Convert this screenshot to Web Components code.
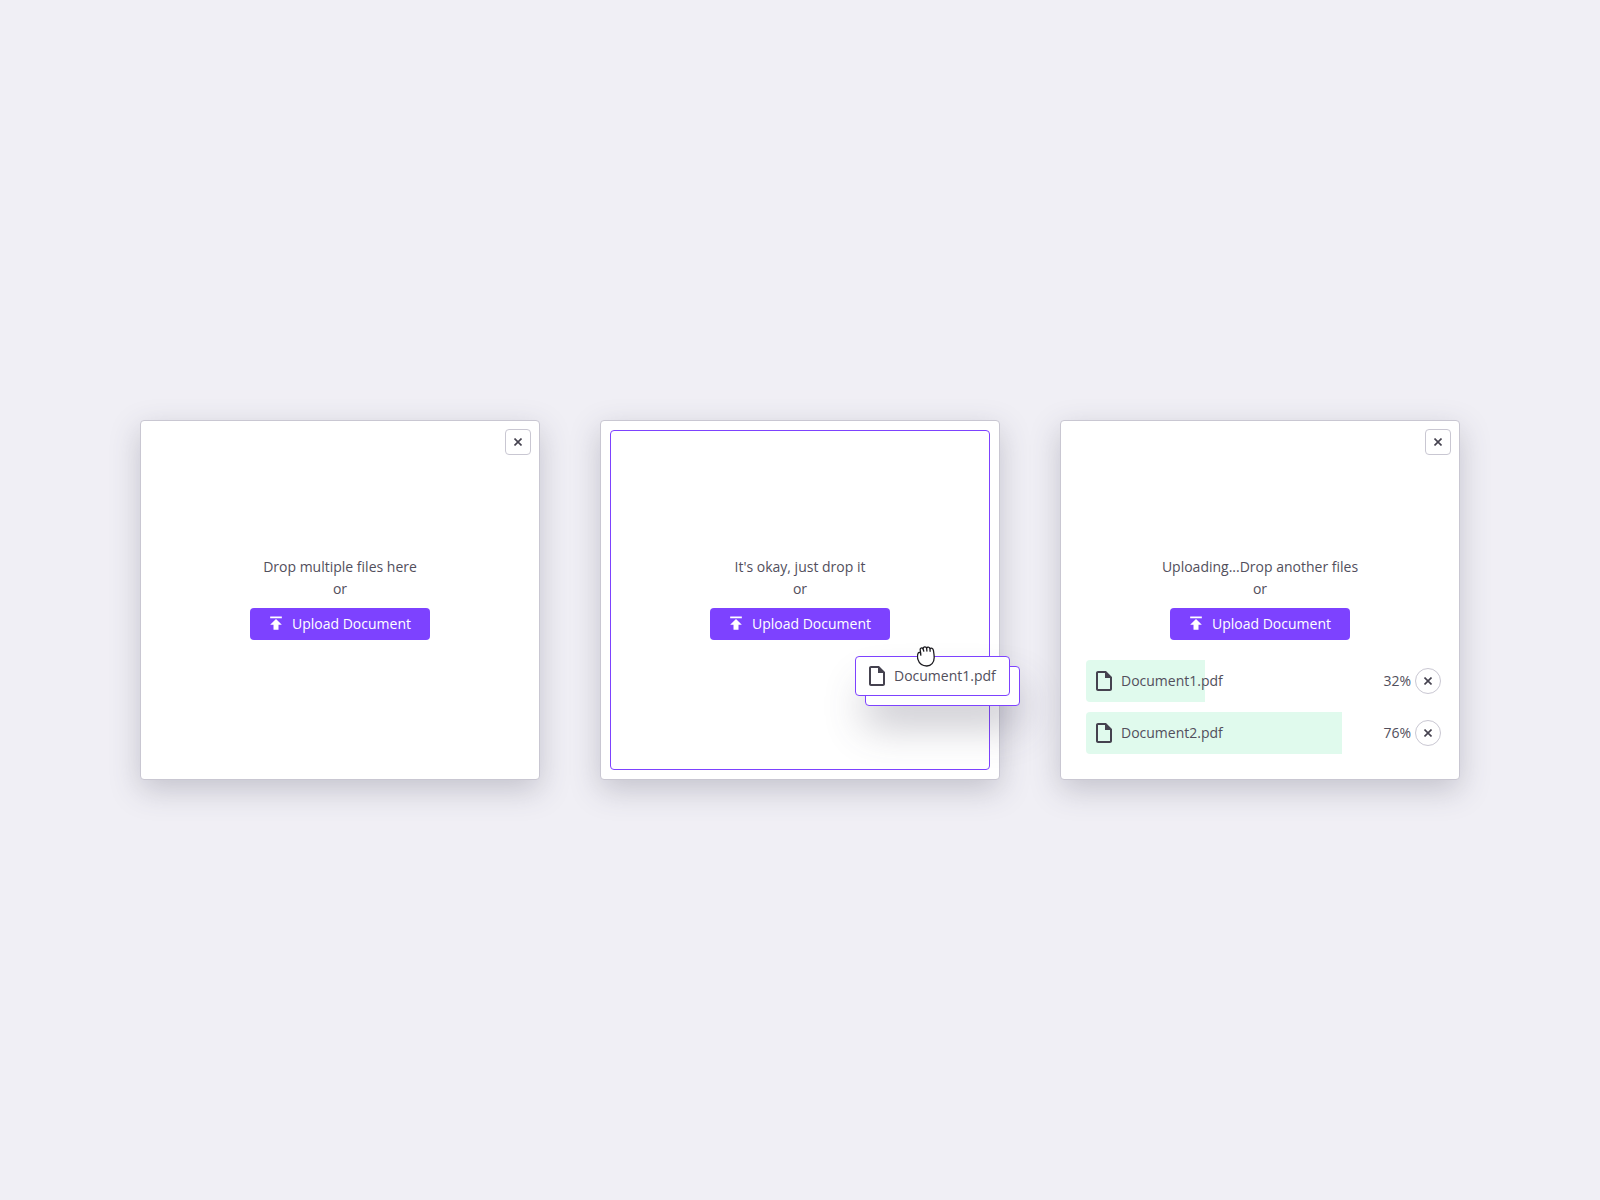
<!DOCTYPE html>
<html lang="en">
<head>
<meta charset="utf-8">
<meta name="viewport" content="width=device-width, initial-scale=1">
<title>Upload Document</title>
<style>
    body {
        margin: 0;
        min-height: 100vh;
        background: #f0eff5;
        color: #524f5c;
        font: 14px/22px "Open Sans", sans-serif;
    }
</style>
</head>
<body>
<upload-board>
    <upload-card message="Drop multiple files here" closable></upload-card>
    <upload-card message="It's okay, just drop it" active>
        <dragged-file slot="drag" name="Document1.pdf"></dragged-file>
    </upload-card>
    <upload-card message="Uploading...Drop another files" closable>
        <upload-item name="Document1.pdf" percent="32" style="--fill: 119px"></upload-item>
        <upload-item name="Document2.pdf" percent="76" style="--fill: 256px"></upload-item>
    </upload-card>
</upload-board>

<script>
class UploadBoard extends HTMLElement {
    constructor() {
        super();
        this.attachShadow({ mode: 'open' });
    }

    connectedCallback() {
        this.shadowRoot.innerHTML = `
            <style>
                :host {
                    display: flex;
                    flex-wrap: wrap;
                    align-items: center;
                    align-content: center;
                    justify-content: center;
                    gap: 60px;
                    min-height: 100vh;
                    padding: 60px;
                    box-sizing: border-box;
                }
            </style>
            <slot></slot>
        `;
    }
}

class CloseButton extends HTMLElement {
    constructor() {
        super();
        this.attachShadow({ mode: 'open' });
    }

    connectedCallback() {
        const label = this.getAttribute('label') || 'Close';

        this.shadowRoot.innerHTML = `
            <style>
                :host {
                    display: block;
                }
                button {
                    display: grid;
                    place-items: center;
                    width: 26px;
                    height: 26px;
                    padding: 0;
                    border: 1px solid #c9c7d2;
                    border-radius: 4px;
                    background: #fff;
                    color: #45424f;
                    cursor: pointer;
                }
                :host([round]) button {
                    border-radius: 50%;
                }
                svg {
                    display: block;
                }
            </style>
            <button type="button" aria-label="${label}">
                <svg width="8" height="8" viewBox="0 0 8 8" fill="none" stroke="currentColor" stroke-width="1.6">
                    <path d="M.5.5l7 7M7.5.5l-7 7"/>
                </svg>
            </button>
        `;
    }
}

class FileLabel extends HTMLElement {
    constructor() {
        super();
        this.attachShadow({ mode: 'open' });
    }

    connectedCallback() {
        this.shadowRoot.innerHTML = `
            <style>
                :host {
                    display: flex;
                    align-items: center;
                    gap: 9px;
                }
                svg {
                    flex: none;
                    display: block;
                }
            </style>
            <svg width="16" height="20" viewBox="4 2 16 20" fill="#45424f">
                <path d="M14 2H6c-1.1 0-2 .9-2 2v16c0 1.1.9 2 2 2h12c1.1 0 2-.9 2-2V8l-6-6zM6 20V4h7v5h5v11H6z"/>
            </svg>
            <span><slot></slot></span>
        `;
    }
}

class UploadItem extends HTMLElement {
    constructor() {
        super();
        this.attachShadow({ mode: 'open' });
    }

    connectedCallback() {
        const name = this.getAttribute('name');
        const percent = this.getAttribute('percent');

        this.shadowRoot.innerHTML = `
            <style>
                :host {
                    display: flex;
                    align-items: center;
                    gap: 4px;
                    height: 42px;
                    padding-left: 10px;
                    border-radius: 4px;
                    background: linear-gradient(#e0faed, #e0faed) 0 0 / var(--fill, 0) 100% no-repeat;
                }
                file-label {
                    flex: 1;
                }
            </style>
            <file-label>${name}</file-label>
            <span>${percent}%</span>
            <close-button round label="Cancel ${name}"></close-button>
        `;
    }
}

class DraggedFile extends HTMLElement {
    constructor() {
        super();
        this.attachShadow({ mode: 'open' });
    }

    connectedCallback() {
        this.shadowRoot.innerHTML = `
            <style>
                :host {
                    display: block;
                }
                .sheet, .under {
                    box-sizing: border-box;
                    border: 1px solid #7d42ff;
                    border-radius: 4px;
                    background: #fff;
                }
                .sheet {
                    position: relative;
                    display: flex;
                    height: 40px;
                    padding: 0 13px;
                }
                /* second file of the stack, peeking out below */
                .under {
                    position: absolute;
                    inset: 10px -10px -10px 10px;
                    box-shadow: 0 20px 40px rgba(69, 66, 89, .3);
                }
                .hand {
                    position: absolute;
                    top: -11px;
                    left: 61px;
                }
            </style>
            <div class="under"></div>
            <div class="sheet">
                <file-label>${this.getAttribute('name')}</file-label>
                <svg class="hand" width="18" height="21" viewBox="0 0 18 21" fill="#fff" stroke="#1c1b20" stroke-width="1.3" stroke-linecap="round" stroke-linejoin="round">
                    <path d="M3.8 8.2L3.2 4C2.9 2 5 1.2 6 2.7C6.2.6 8.9.2 9.6 2.1C10.2.6 12.6.8 13 2.7C14.2 1.6 16.1 2.3 16.4 4.3C16.8 6.8 17.2 9 17.2 11.6C17.2 16.6 14.1 20 9.8 20C5.1 20 2.1 17.3.9 13.4C.3 11.3.5 8.6 1.2 7.1C1.7 6.1 3.3 6.2 3.5 7.2L3.8 9.2"/>
                    <path d="M6 2.7l.8 2.5M9.6 2.1l.3 2.9M13 2.7l.1 2.6" fill="none"/>
                </svg>
            </div>
        `;
    }
}

class UploadCard extends HTMLElement {
    constructor() {
        super();
        this.attachShadow({ mode: 'open' });
    }

    connectedCallback() {
        const message = this.getAttribute('message');

        this.shadowRoot.innerHTML = `
            <style>
                :host {
                    position: relative;
                    flex: 0 1 400px;
                    min-width: 320px;
                    box-sizing: border-box;
                    border: 1px solid #c9c7d2;
                    border-radius: 4px;
                    background: #fff;
                    box-shadow: 0 10px 30px rgba(69, 66, 89, .25);
                }
                .zone {
                    display: grid;
                    grid-template-rows: minmax(min-content, 1fr) auto minmax(min-content, 1fr);
                    min-height: 358px;
                    box-sizing: border-box;
                }
                :host([active]) .zone {
                    min-height: 340px;
                    margin: 9px;
                    border: 1px solid #7d42ff;
                    border-radius: 4px;
                }
                .top {
                    display: flex;
                    justify-content: flex-end;
                    align-items: flex-start;
                    padding: 8px;
                }
                .prompt {
                    display: flex;
                    flex-direction: column;
                    align-items: center;
                    padding-bottom: 4px;
                    text-align: center;
                }
                p {
                    margin: 0;
                }
                .upload {
                    display: flex;
                    align-items: center;
                    justify-content: center;
                    gap: 6px;
                    height: 32px;
                    margin-top: 8px;
                    padding: 0 19px 0 16px;
                    border: 0;
                    border-radius: 4px;
                    background: #7d42ff;
                    color: #fff;
                    font: inherit;
                    cursor: pointer;
                }
                .files {
                    display: flex;
                    flex-direction: column;
                    justify-content: flex-end;
                    gap: 10px;
                    padding: 0 18px 25px 25px;
                }
                :host([active]) .files {
                    padding: 0;
                }
                ::slotted([slot="drag"]) {
                    position: absolute;
                    top: 235px;
                    left: 254px;
                    z-index: 1;
                }
            </style>
            <div class="zone">
                <div class="top">
                    ${this.hasAttribute('closable') ? '<close-button></close-button>' : ''}
                </div>
                <div class="prompt">
                    <p>${message}</p>
                    <p>or</p>
                    <button type="button" class="upload">
                        <svg width="20" height="20" viewBox="0 1 24 24" fill="#fff">
                            <path d="M5 4v2h14V4H5zm0 10h4v6h6v-6h4l-7-7-7 7z"/>
                        </svg>
                        <span>Upload Document</span>
                    </button>
                </div>
                <div class="files"><slot></slot></div>
            </div>
            <slot name="drag"></slot>
        `;
    }
}

customElements.define('upload-board', UploadBoard);
customElements.define('close-button', CloseButton);
customElements.define('file-label', FileLabel);
customElements.define('upload-item', UploadItem);
customElements.define('dragged-file', DraggedFile);
customElements.define('upload-card', UploadCard);
</script>
</body>
</html>
